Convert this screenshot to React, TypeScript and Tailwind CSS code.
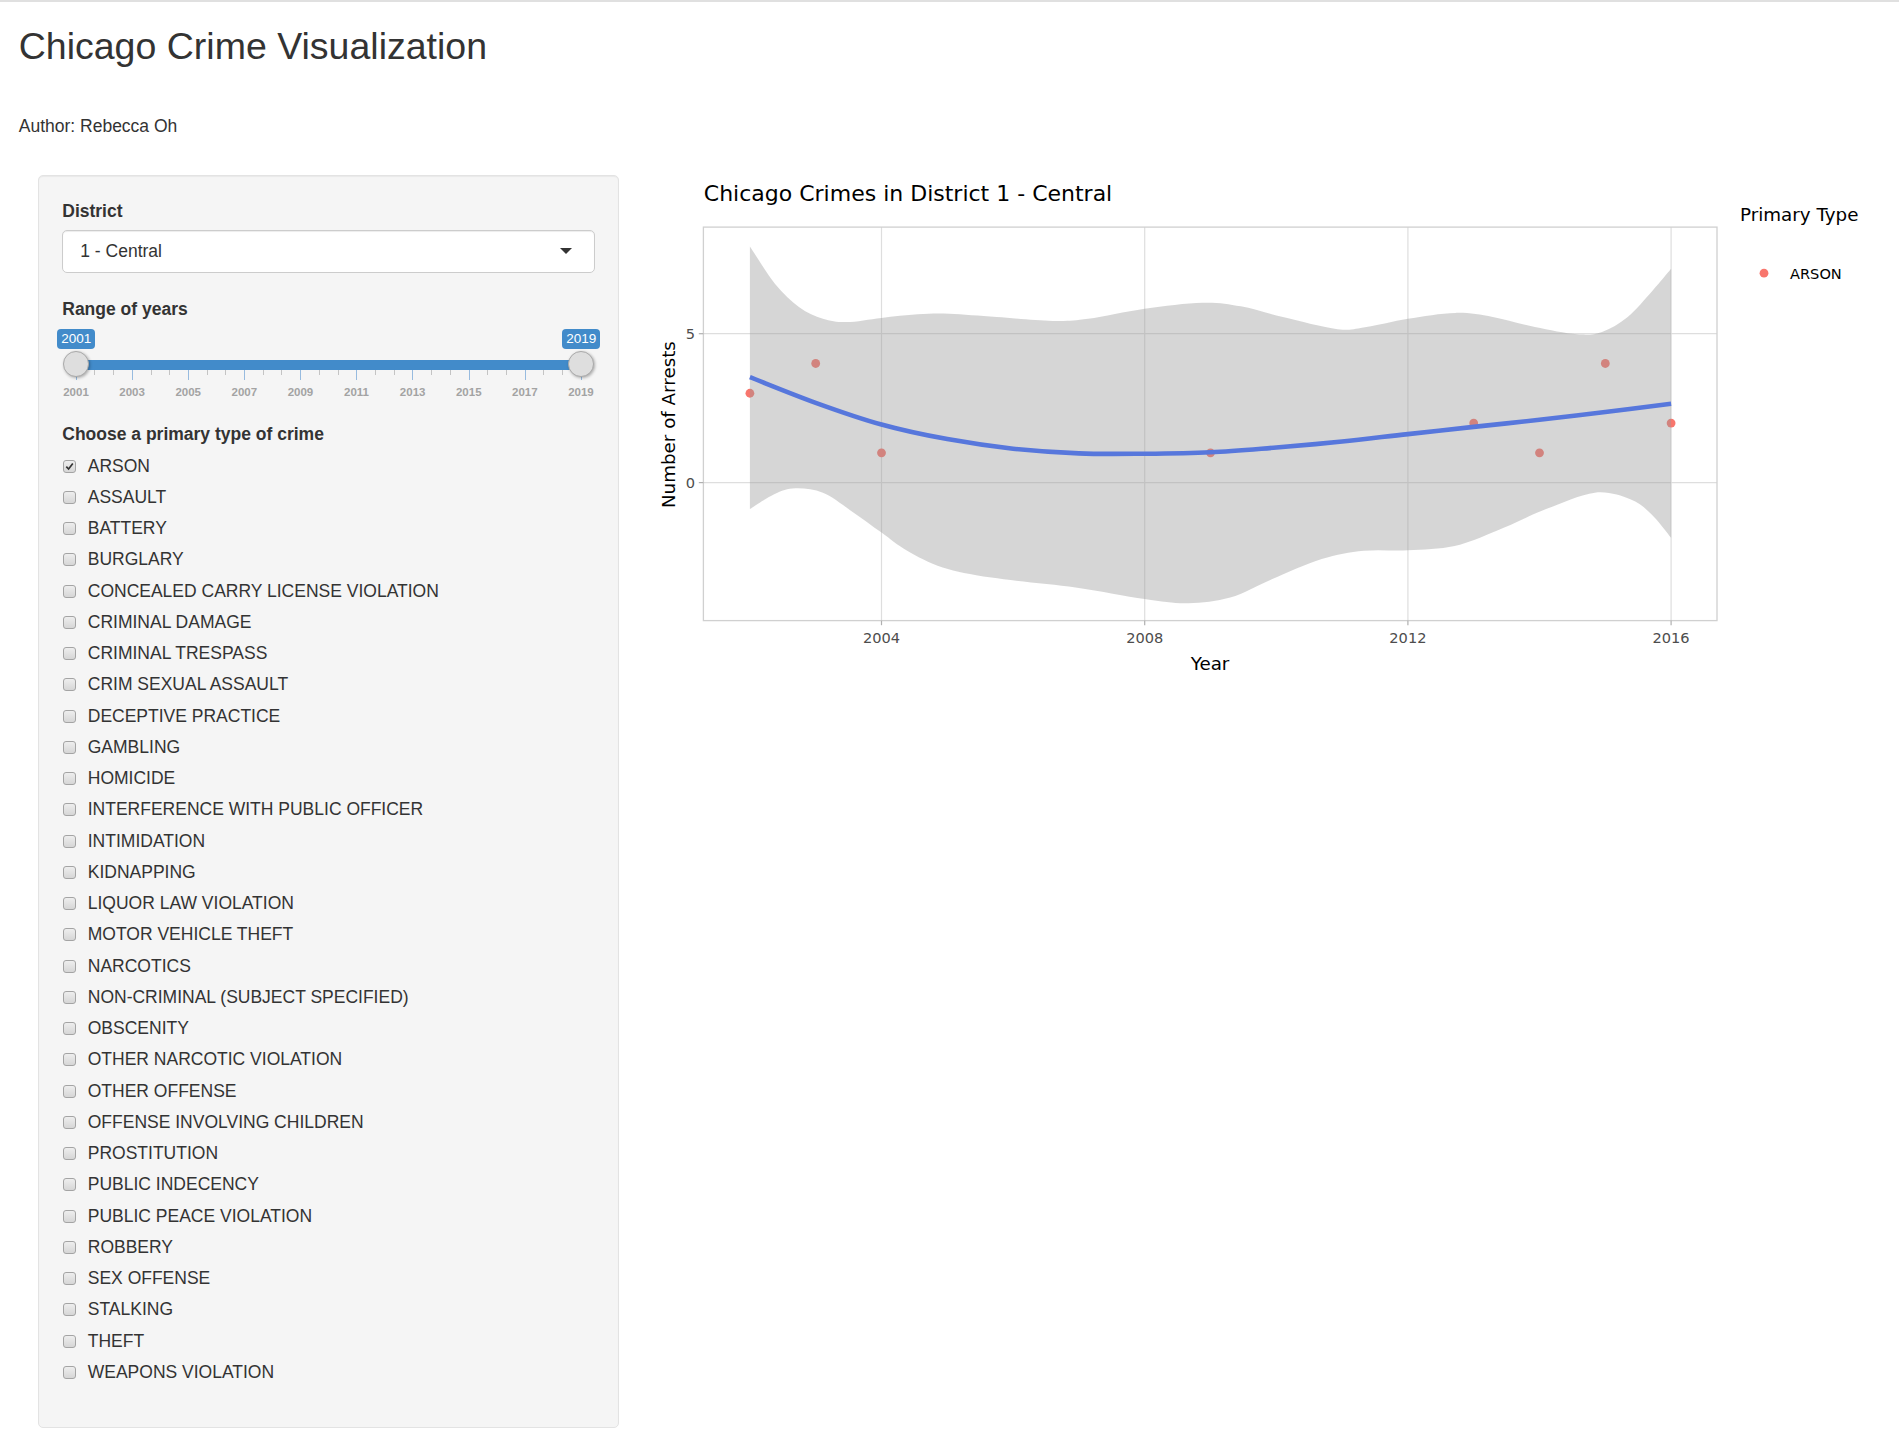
import React from "react";

const crimeTypes = [
  "ARSON",
  "ASSAULT",
  "BATTERY",
  "BURGLARY",
  "CONCEALED CARRY LICENSE VIOLATION",
  "CRIMINAL DAMAGE",
  "CRIMINAL TRESPASS",
  "CRIM SEXUAL ASSAULT",
  "DECEPTIVE PRACTICE",
  "GAMBLING",
  "HOMICIDE",
  "INTERFERENCE WITH PUBLIC OFFICER",
  "INTIMIDATION",
  "KIDNAPPING",
  "LIQUOR LAW VIOLATION",
  "MOTOR VEHICLE THEFT",
  "NARCOTICS",
  "NON-CRIMINAL (SUBJECT SPECIFIED)",
  "OBSCENITY",
  "OTHER NARCOTIC VIOLATION",
  "OTHER OFFENSE",
  "OFFENSE INVOLVING CHILDREN",
  "PROSTITUTION",
  "PUBLIC INDECENCY",
  "PUBLIC PEACE VIOLATION",
  "ROBBERY",
  "SEX OFFENSE",
  "STALKING",
  "THEFT",
  "WEAPONS VIOLATION",
];

const gridYears = [2001, 2003, 2005, 2007, 2009, 2011, 2013, 2015, 2017, 2019];

// arrests per year for ARSON in district 1
const points: [number, number][] = [
  [2002, 3],
  [2003, 4],
  [2004, 1],
  [2009, 1],
  [2013, 2],
  [2014, 1],
  [2015, 4],
  [2016, 2],
];

const loess: [number, number][] = [
  [2002, 3.54], [2003, 2.68], [2004, 1.95], [2005, 1.46], [2006, 1.14],
  [2007, 0.98], [2008, 0.97], [2009, 1.02], [2010, 1.18], [2011, 1.38],
  [2012, 1.63], [2013, 1.87], [2014, 2.11], [2015, 2.37], [2016, 2.65],
];

const upper: [number, number][] = [
  [2002, 7.93], [2002.38, 6.68], [2002.75, 5.89], [2003.11, 5.5], [2003.47, 5.39],
  [2004, 5.53], [2004.55, 5.65], [2005.03, 5.67], [2005.75, 5.56], [2006.6, 5.43],
  [2007.14, 5.5], [2008, 5.84], [2008.88, 6.04], [2009.46, 5.92], [2010.1, 5.56],
  [2010.93, 5.15], [2011.37, 5.22], [2012, 5.5], [2012.72, 5.7], [2013.29, 5.56],
  [2013.93, 5.22], [2014.57, 4.98], [2014.95, 5.06], [2015.34, 5.56], [2015.72, 6.45],
  [2016, 7.18],
];

const lower: [number, number][] = [
  [2002, -0.89], [2002.37, -0.39], [2002.69, -0.19], [2003.11, -0.34], [2003.54, -0.95],
  [2004, -1.68], [2004.39, -2.29], [2004.93, -2.85], [2005.67, -3.19], [2006.95, -3.52],
  [2008, -3.91], [2008.66, -4.05], [2009.3, -3.86], [2009.94, -3.24], [2010.69, -2.57],
  [2011.33, -2.29], [2012, -2.27], [2012.71, -2.13], [2013.35, -1.62], [2014.1, -0.89],
  [2014.84, -0.34], [2015.38, -0.56], [2015.7, -1.06], [2016, -1.85],
];

// svg sits at page (658, 174.4)
const X = (yr: number) => 880.5 + (yr - 2004) * 65.8 - 658;
const Y = (v: number) => 482 - v * 29.78 - 174.4;

const px = (d: [number, number][]) => d.map(([a, b]) => [X(a), Y(b)] as [number, number]);

// catmull-rom -> cubic bezier segments
function curve(pts: [number, number][]) {
  let d = "";
  for (let i = 0; i < pts.length - 1; i++) {
    const p0 = pts[i - 1] || pts[i];
    const p1 = pts[i];
    const p2 = pts[i + 1];
    const p3 = pts[i + 2] || p2;
    const c1x = p1[0] + (p2[0] - p0[0]) / 6;
    const c1y = p1[1] + (p2[1] - p0[1]) / 6;
    const c2x = p2[0] - (p3[0] - p1[0]) / 6;
    const c2y = p2[1] - (p3[1] - p1[1]) / 6;
    d += ` C${c1x.toFixed(1)},${c1y.toFixed(1)} ${c2x.toFixed(1)},${c2y.toFixed(1)} ${p2[0].toFixed(1)},${p2[1].toFixed(1)}`;
  }
  return d;
}

function CrimeChart() {
  const up = px(upper);
  const lo = px(lower).reverse();
  const ribbon = `M${up[0][0]},${up[0][1]}${curve(up)} L${lo[0][0]},${lo[0][1]}${curve(lo)} Z`;
  const fit = px(loess);
  const line = `M${fit[0][0]},${fit[0][1]}${curve(fit)}`;

  const left = 44.4;
  const top = 52.1;
  const right = 1058;
  const bottom = 445.6;
  const font = "'DejaVu Sans', Verdana, sans-serif";

  return (
    <svg width={1203} height={500} className="block">
      <text x={44.8} y={26.2} fontFamily={font} fontSize={22} fill="#000">
        Chicago Crimes in District 1 - Central
      </text>

      <rect x={left} y={top} width={right - left} height={bottom - top} fill="#fff" />
      {[2004, 2008, 2012, 2016].map((yr) => (
        <line key={yr} x1={X(yr)} x2={X(yr)} y1={top} y2={bottom} stroke="#dedede" strokeWidth={1.2} />
      ))}
      {[0, 5].map((v) => (
        <line key={v} x1={left} x2={right} y1={Y(v)} y2={Y(v)} stroke="#dedede" strokeWidth={1.2} />
      ))}

      {points.map(([yr, v]) => (
        <circle key={yr} cx={X(yr)} cy={Y(v)} r={4.4} fill="#F8766D" />
      ))}
      <path d={ribbon} fill="rgba(153,153,153,0.4)" />
      <path d={line} fill="none" stroke="#5777dc" strokeWidth={4.6} strokeLinecap="butt" />

      <rect x={left} y={top} width={right - left} height={bottom - top} fill="none" stroke="#d0d0d0" strokeWidth={1.3} />

      {[0, 5].map((v) => (
        <g key={v}>
          <line x1={39.8} x2={left} y1={Y(v)} y2={Y(v)} stroke="#b0b0b0" strokeWidth={1.2} />
          <text x={36} y={Y(v) + 5.3} textAnchor="end" fontFamily={font} fontSize={14.6} fill="#4d4d4d">
            {v}
          </text>
        </g>
      ))}
      {[2004, 2008, 2012, 2016].map((yr) => (
        <g key={yr}>
          <line x1={X(yr)} x2={X(yr)} y1={bottom} y2={bottom + 4.6} stroke="#b0b0b0" strokeWidth={1.2} />
          <text x={X(yr)} y={467.8} textAnchor="middle" fontFamily={font} fontSize={14.6} fill="#4d4d4d">
            {yr}
          </text>
        </g>
      ))}

      <text transform="translate(16.4,249.6) rotate(-90)" textAnchor="middle" fontFamily={font} fontSize={18.3} fill="#000">
        Number of Arrests
      </text>
      <text x={551} y={494.8} textAnchor="middle" fontFamily={font} fontSize={18.3} fill="#000">
        Year
      </text>

      <text x={1081} y={46.3} fontFamily={font} fontSize={18.3} fill="#000">
        Primary Type
      </text>
      <circle cx={1105} cy={98.2} r={4.4} fill="#F8766D" />
      <text x={1131} y={103.5} fontFamily={font} fontSize={14.6} fill="#000">
        ARSON
      </text>
    </svg>
  );
}

function Checkbox({ checked }: { checked: boolean }) {
  return (
    <span className="ml-[1px] flex h-[13px] w-[13px] shrink-0 items-center justify-center rounded-[3px] border border-[#a4a4a4] bg-linear-to-b from-[#eeeeee] to-[#d6d6d6]">
      {checked && (
        <svg width="9" height="9" viewBox="0 0 9 9">
          <path d="M1.3 4.6 L3.6 7 L7.8 1.6" fill="none" stroke="#333" strokeWidth="1.7" />
        </svg>
      )}
    </span>
  );
}

function YearSlider() {
  const ticks = Array.from({ length: 28 }, (_, i) => i);
  return (
    <div className="relative h-[100px]">
      <div className="absolute left-[-5px] top-[7px] h-[20px] w-[38px] rounded-[4px] bg-[#428bca] text-center text-[13.5px] leading-[20px] text-white">
        2001
      </div>
      <div className="absolute left-[500px] top-[7px] h-[20px] w-[38px] rounded-[4px] bg-[#428bca] text-center text-[13.5px] leading-[20px] text-white">
        2019
      </div>

      <div className="absolute left-[13.75px] top-[38.5px] h-[10px] w-[505.5px] bg-[#428bca]" />

      <div className="absolute left-[13.5px] top-[48.5px] flex w-[506px] justify-between">
        {ticks.map((i) =>
          i % 3 === 0 ? (
            <span key={i} className="block h-[10px] w-px bg-[#97bbdf]" />
          ) : (
            <span key={i} className="block h-[5px] w-px bg-[#c4c4c4]" />
          )
        )}
      </div>

      <div className="absolute left-[-6.25px] top-[63.5px] flex w-[545px] justify-between">
        {gridYears.map((yr) => (
          <span key={yr} className="block w-[40px] text-center text-[11.5px] font-semibold leading-[14px] text-[#a3a3a3]">
            {yr}
          </span>
        ))}
      </div>

      <div className="absolute left-[1px] top-[29px] h-[26px] w-[26px] rounded-full border border-[#aaa] bg-[#dedede] shadow-[1px_1px_3px_rgba(0,0,0,0.3)]" />
      <div className="absolute left-[505.5px] top-[29px] h-[26px] w-[26px] rounded-full border border-[#aaa] bg-[#dedede] shadow-[1px_1px_3px_rgba(0,0,0,0.3)]" />
    </div>
  );
}

export default function App() {
  return (
    <div className="min-h-screen border-t-2 border-[#e0e0e0] bg-white font-['Liberation_Sans',Arial,sans-serif] text-[17.5px] leading-[25px] text-[#333]">
      <div className="px-[18.75px]">
        <h2 className="mt-[24px] text-[37.5px] font-normal leading-[41.25px]">Chicago Crime Visualization</h2>
        <p className="mt-[47px]">Author: Rebecca Oh</p>

        <div className="mt-[35.7px] flex items-start pl-[18.75px]">
          <form className="w-[581px] shrink-0 rounded-[5px] border border-[#e3e3e3] bg-[#f5f5f5] pb-[36px] pl-[23.75px] pr-[22.5px] pt-[23px] shadow-[inset_0_1px_1px_rgba(0,0,0,0.05)]">
            <label className="block font-bold">District</label>
            <div className="mt-[6.25px] flex h-[42.5px] items-center justify-between rounded-[5px] border border-[#ccc] bg-white pl-[17px] pr-[22px] shadow-[inset_0_1px_1px_rgba(0,0,0,0.075)]">
              <span>1 - Central</span>
              <span className="block h-0 w-0 border-x-[6.25px] border-t-[6.25px] border-x-transparent border-t-[#333]" />
            </div>

            <label className="mt-[24px] block font-bold">Range of years</label>
            <YearSlider />

            <label className="block font-bold">Choose a primary type of crime</label>
            <div className="mt-[7px]">
              {crimeTypes.map((name, i) => (
                <div key={name} className="mb-[6.25px] flex h-[25px] items-center">
                  <Checkbox checked={i === 0} />
                  <span className="ml-[11.5px]">{name}</span>
                </div>
              ))}
            </div>
          </form>

          <div className="ml-[40px] w-[1203px]">
            <CrimeChart />
          </div>
        </div>
      </div>
    </div>
  );
}
